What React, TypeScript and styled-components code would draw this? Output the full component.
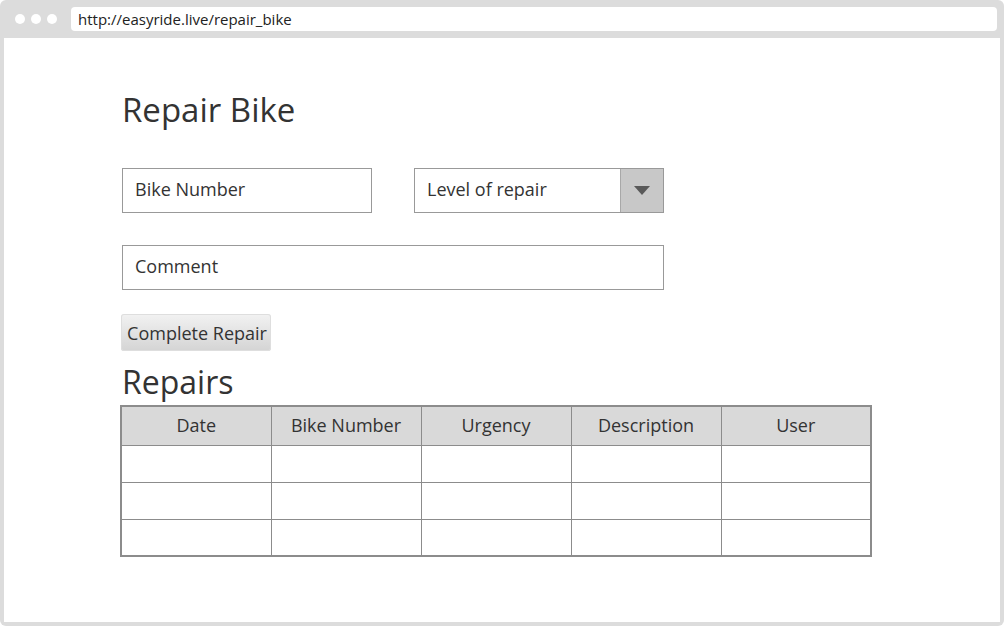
import styled, { createGlobalStyle } from 'styled-components';

const GlobalStyle = createGlobalStyle`
  html, body {
    margin: 0;
    padding: 0;
    background: #ffffff;
  }
  * {
    box-sizing: border-box;
  }
`;

const Frame = styled.div`
  width: 1004px;
  height: 626px;
  background: #dcdcdc;
  border-radius: 6px;
  padding: 0 4px 4px 4px;
  display: flex;
  flex-direction: column;
  font-family: 'Open Sans', 'Noto Sans', sans-serif;
  color: #333333;
`;

const TopBar = styled.div`
  height: 38px;
  display: flex;
  align-items: center;
  padding: 0 3px 0 11px;
`;

const Dots = styled.div`
  display: flex;
  gap: 6px;
  margin-right: 14px;
`;

const Dot = styled.span`
  width: 10px;
  height: 10px;
  border-radius: 50%;
  background: #ffffff;
`;

const Url = styled.div`
  flex: 1;
  height: 24px;
  background: #ffffff;
  border-radius: 4px;
  display: flex;
  align-items: center;
  padding-left: 7px;
  font-size: 15px;
  color: #222222;
`;

const Page = styled.main`
  flex: 1;
  background: #ffffff;
  padding: 82px 0 0 118px;
  display: flex;
  flex-direction: column;
  align-items: flex-start;
`;

const Title = styled.h1`
  margin: 0;
  font-size: 33px;
  font-weight: 400;
  line-height: 44px;
  margin-top: -32px;
  color: #333333;
`;

const Row = styled.div`
  display: flex;
  gap: 42px;
  margin-top: 36px;
`;

const Field = styled.div<{ $width: number }>`
  width: ${(p) => p.$width}px;
  height: 45px;
  border: 1px solid #999999;
  display: flex;
  align-items: center;
  padding: 0 0 3px 12px;
  font-size: 18px;
  color: #333333;
  background: #ffffff;
`;

const Select = styled(Field)`
  padding: 0 0 0 12px;
  align-items: stretch;
`;

const SelectLabel = styled.span`
  flex: 1;
  display: flex;
  align-items: center;
  padding-bottom: 3px;
`;

const Arrow = styled.span`
  width: 43px;
  background: #c8c8c8;
  border-left: 1px solid #a8a8a8;
  display: flex;
  align-items: center;
  justify-content: center;
`;

const CommentRow = styled.div`
  margin-top: 32px;
`;

const Button = styled.button`
  margin-top: 24px;
  margin-left: -1px;
  width: 150px;
  height: 37px;
  padding: 0 0 0 2px;
  border: none;
  border-radius: 3px;
  background: linear-gradient(#f2f2f2, #d4d4d4);
  box-shadow: 0 0 0 1px #dedede inset;
  font-family: 'Open Sans', 'Noto Sans', sans-serif;
  font-size: 18px;
  color: #333333;
`;

const SectionTitle = styled.h2`
  margin: 9px 0 0 0;
  font-size: 32px;
  font-weight: 400;
  line-height: 44px;
  color: #333333;
`;

const Table = styled.table`
  margin-left: -2px;
  margin-top: 1px;
  border-collapse: collapse;
  border: 2px solid #8c8c8c;
`;

const Th = styled.th`
  width: 150px;
  height: 39px;
  background: #d9d9d9;
  border: 1px solid #8c8c8c;
  font-weight: 400;
  font-size: 18px;
  color: #333333;
  padding: 0 0 2px 0;
`;

const Td = styled.td`
  height: 37px;
  border: 1px solid #8c8c8c;
  padding: 0;
`;

const columns = ['Date', 'Bike Number', 'Urgency', 'Description', 'User'];

export default function App() {
  return (
    <>
      <GlobalStyle />
      <Frame>
        <TopBar>
          <Dots>
            <Dot />
            <Dot />
            <Dot />
          </Dots>
          <Url>http://easyride.live/repair_bike</Url>
        </TopBar>
        <Page>
          <Title>Repair Bike</Title>
          <Row>
            <Field $width={250}>Bike Number</Field>
            <Select $width={250}>
              <SelectLabel>Level of repair</SelectLabel>
              <Arrow>
                <svg width="16" height="9" viewBox="0 0 16 9">
                  <path d="M0 0 L16 0 L8 9 Z" fill="#595959" />
                </svg>
              </Arrow>
            </Select>
          </Row>
          <CommentRow>
            <Field $width={542}>Comment</Field>
          </CommentRow>
          <Button>Complete Repair</Button>
          <SectionTitle>Repairs</SectionTitle>
          <Table>
            <thead>
              <tr>
                {columns.map((c) => (
                  <Th key={c}>{c}</Th>
                ))}
              </tr>
            </thead>
            <tbody>
              {[0, 1, 2].map((r) => (
                <tr key={r}>
                  {columns.map((c) => (
                    <Td key={c} />
                  ))}
                </tr>
              ))}
            </tbody>
          </Table>
        </Page>
      </Frame>
    </>
  );
}
